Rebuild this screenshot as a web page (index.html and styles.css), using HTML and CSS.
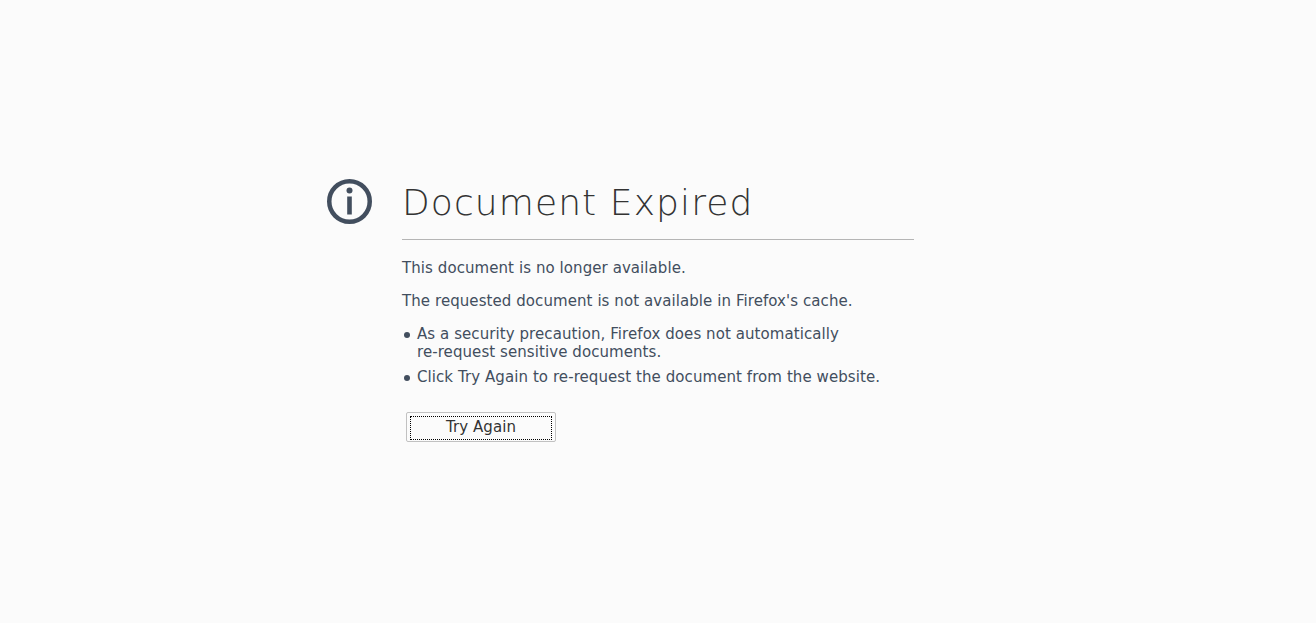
FILE: index.html
```html
<!DOCTYPE html>
<html lang="en">
<head>
  <meta charset="UTF-8">
  <title>Document Expired</title>
  <link rel="stylesheet" href="styles.css">
</head>
<body>
<div class="container">
  <svg class="icon" width="45" height="45" viewBox="0 0 45 45">
    <circle cx="22.5" cy="22.5" r="20.25" fill="none" stroke="#424e5e" stroke-width="4.5"/>
    <circle cx="22.5" cy="11.5" r="3" fill="#424e5e"/>
    <rect x="20.2" y="17.5" width="4.6" height="18" fill="#424e5e"/>
  </svg>
  <div class="content">
    <h1>Document Expired</h1>
    <p>This document is no longer available.</p>
    <p>The requested document is not available in Firefox's cache.</p>
    <ul>
      <li>As a security precaution, Firefox does not automatically<br>re-request sensitive documents.</li>
      <li>Click Try Again to re-request the document from the website.</li>
    </ul>
    <button><span class="focus">Try Again</span></button>
  </div>
</div>
</body>
</html>
```

FILE: styles.css
```css
html, body {
  height: 100%;
}
body {
  margin: 0;
  background-color: #fbfbfb;
  color: #424e5e;
  font-family: "DejaVu Sans", sans-serif;
  font-size: 15px;
  letter-spacing: 0.075px;
  overflow: hidden;
}
.container {
  display: flex;
  gap: 30px;
  padding: 179px 0 0 327px;
}
.icon {
  flex-shrink: 0;
}
.content {
  width: 512px;
}
h1 {
  margin: 0 0 19px;
  padding: 1px 0 13px;
  border-bottom: 1px solid #b5b5b5;
  color: #333;
  font-size: 36px;
  font-weight: 200;
  line-height: 46px;
  letter-spacing: 1.1px;
}
p {
  margin: 0 0 15px;
  line-height: 18px;
}
ul {
  margin: 0 0 26px;
  padding: 0;
  list-style: none;
}
li {
  display: flex;
  margin-bottom: 7px;
  line-height: 18px;
}
li::before {
  content: "";
  flex-shrink: 0;
  width: 6px;
  height: 6px;
  margin: 7px 7px 0 2px;
  border-radius: 50%;
  background-color: #424e5e;
}
button {
  display: block;
  margin-left: 4px;
  padding: 3px;
  width: 150px;
  height: 30px;
  background-color: #fbfbfb;
  border: 1px solid #c1c1c1;
  border-radius: 2px;
  color: #333;
  font-family: inherit;
  font-size: 15px;
  letter-spacing: inherit;
}
.focus {
  display: block;
  height: 22px;
  line-height: 20px;
  border: 1px dotted #000;
}
```
